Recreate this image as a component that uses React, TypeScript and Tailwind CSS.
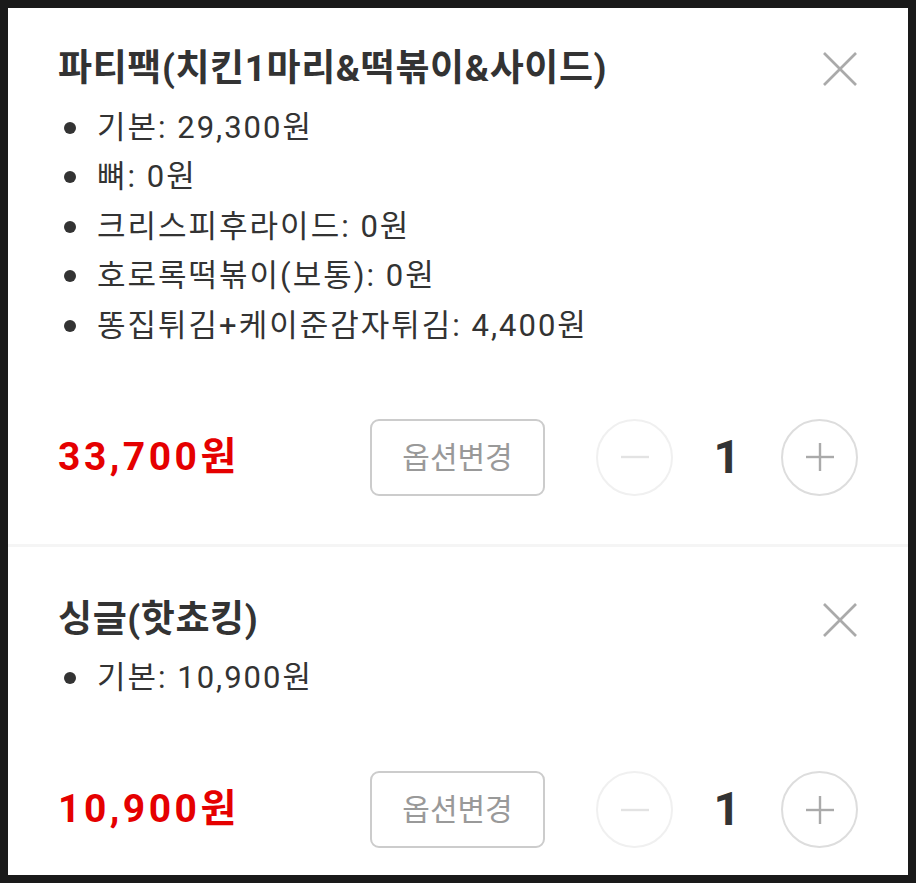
interface CartItem {
  id: number;
  name: string;
  options: { label: string; price: string }[];
  total: string;
  qty: number;
}

const items: CartItem[] = [
  {
    id: 1,
    name: '파티팩(치킨1마리&떡볶이&사이드)',
    options: [
      { label: '기본', price: '29,300원' },
      { label: '뼈', price: '0원' },
      { label: '크리스피후라이드', price: '0원' },
      { label: '호로록떡볶이(보통)', price: '0원' },
      { label: '똥집튀김+케이준감자튀김', price: '4,400원' },
    ],
    total: '33,700원',
    qty: 1,
  },
  {
    id: 2,
    name: '싱글(핫쵸킹)',
    options: [{ label: '기본', price: '10,900원' }],
    total: '10,900원',
    qty: 1,
  },
];

function CartRow({ item, first }: { item: CartItem; first: boolean }) {
  return (
    <div className={`px-[50px] pb-[48px] ${first ? 'pt-[39px]' : 'pt-[51px]'}`}>
      <div className="flex items-center justify-between">
        <h2 className="text-[37px] leading-[44px] font-bold text-[#333] tracking-[0.6px]">
          {item.name}
        </h2>
        <button className="text-[#aaa]">
          <svg width="36" height="36" viewBox="0 0 36 36" stroke="currentColor" strokeWidth="2.6">
            <line x1="2" y1="2" x2="34" y2="34" />
            <line x1="34" y1="2" x2="2" y2="34" />
          </svg>
        </button>
      </div>
      <ul className="mt-[12px]">
        {item.options.map((o) => (
          <li
            key={o.label}
            className="flex items-center h-[49.5px] text-[31px] text-[#333] tracking-[2px]"
          >
            <span className="w-[12px] h-[12px] rounded-full bg-[#333] ml-[6px] mr-[21px]" />
            <span>
              {o.label}: {o.price}
            </span>
          </li>
        ))}
      </ul>
      <div className="mt-[68px] flex items-center h-[77px]">
        <div className="flex-1 text-[39px] font-bold text-[#e50000] tracking-[3.5px]">
          {item.total}
        </div>
        <button className="w-[175px] h-[77px] border-2 border-[#ccc] rounded-[9px] text-[30px] text-[#999]">
          옵션변경
        </button>
        <button className="ml-[51px] w-[77px] h-[77px] rounded-full border-2 border-[#f0f0f0] flex items-center justify-center text-[#e3e3e3]">
          <svg width="28" height="28" viewBox="0 0 28 28" stroke="currentColor" strokeWidth="2.4">
            <line x1="0" y1="14" x2="28" y2="14" />
          </svg>
        </button>
        <div className="w-[108px] text-center text-[47px] font-bold text-[#333]">{item.qty}</div>
        <button className="w-[77px] h-[77px] rounded-full border-2 border-[#ddd] flex items-center justify-center text-[#aaa]">
          <svg width="28" height="28" viewBox="0 0 28 28" stroke="currentColor" strokeWidth="2.4">
            <line x1="0" y1="14" x2="28" y2="14" />
            <line x1="14" y1="0" x2="14" y2="28" />
          </svg>
        </button>
      </div>
    </div>
  );
}

export default function App() {
  return (
    <div
      className="w-[916px] h-[883px] bg-[#1a1a1a] p-[8px]"
      style={{ fontFamily: 'Roboto, "Noto Sans CJK KR", "Noto Sans", sans-serif' }}
    >
      <div className="w-[900px] h-[867px] bg-white overflow-hidden">
        {items.map((item, i) => (
          <div key={item.id}>
            {i > 0 && <div className="h-[3px] bg-[#f5f5f5]" />}
            <CartRow item={item} first={i === 0} />
          </div>
        ))}
      </div>
    </div>
  );
}
